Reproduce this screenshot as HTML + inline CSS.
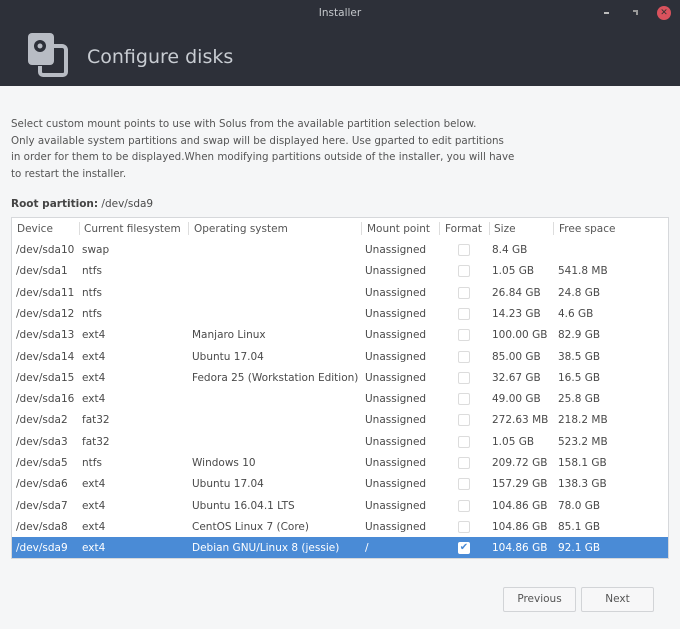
<!DOCTYPE html><html><head><style>
*{margin:0;padding:0;box-sizing:border-box}
body{width:680px;height:629px;background:#f5f6f7;font-family:"DejaVu Sans","Liberation Sans",sans-serif;font-size:10.5px;color:#4a4a4a;position:relative;overflow:hidden}
.hdr{position:absolute;left:0;top:0;width:680px;height:86px;background:#2d3039}
.t{position:absolute;top:7px;width:680px;text-align:center;color:#c5c8cc;font-size:10.5px}
.h1{position:absolute;left:87px;top:46px;color:#c8ccd2;font-size:19px}
p.d{position:absolute;left:11px;top:116px;line-height:16.5px;color:#555;font-size:10.3px}
.rp{position:absolute;left:11px;top:198px}
.tb{position:absolute;left:11px;top:217px;width:658px;height:342px;background:#fff;border:1px solid #d6d8db}
.r{position:absolute;left:0;width:656px;height:21.3px;line-height:22px}
.r span{position:absolute}
.hd{color:#555}
.sep{position:absolute;top:4px;width:1px;height:13px;background:#ddd}
.cb{position:absolute;left:446px;top:5px;width:12px;height:12px;border:1px solid #dcdcdc;border-radius:2px;background:#fff}
.sel{background:#4a8bd6;color:#fff}
.btn{position:absolute;top:587px;height:25px;border:1px solid #d2d4d7;border-radius:2px;background:#f7f7f8;text-align:center;line-height:23px;color:#555}
</style></head><body>
<div class="hdr">
<div class="t">Installer</div>
<div style="position:absolute;left:604px;top:12px;width:5px;height:2px;background:#bbb"></div>
<div style="position:absolute;left:633px;top:10px;width:5px;height:5px;border-top:2px solid #999;border-right:2px solid #999"></div>
<div style="position:absolute;left:657px;top:6px;width:14px;height:14px;border-radius:7px;background:#d9525d;color:#333;font-size:9px;line-height:14px;text-align:center">✕</div>
<svg style="position:absolute;left:28px;top:32px" width="42" height="46" viewBox="0 0 42 46"><path d="M10 14h24a4 4 0 0 1 4 4v22a3 3 0 0 1-3 3H15a3 3 0 0 1-3-3v-6" fill="none" stroke="#b8bcc4" stroke-width="4"/><rect x="0" y="1" width="26" height="32" rx="4" fill="#b8bcc4"/><circle cx="12" cy="14" r="6" fill="#2d3039"/><circle cx="12" cy="14" r="2.5" fill="#b8bcc4"/></svg>
<div class="h1">Configure disks</div>
</div>
<p class="d">Select custom mount points to use with Solus from the available partition selection below.<br>Only available system partitions and swap will be displayed here. Use gparted to edit partitions<br>in order for them to be displayed.When modifying partitions outside of the installer, you will have<br>to restart the installer.</p>
<div class="rp"><b style="color:#444">Root partition:</b> /dev/sda9</div>
<div class="tb">
<div class="r hd" style="top:0"><span style="left:5px">Device</span><i class="sep" style="left:67px"></i><span style="left:72px">Current filesystem</span><i class="sep" style="left:176px"></i><span style="left:182px">Operating system</span><i class="sep" style="left:349px"></i><span style="left:355px">Mount point</span><i class="sep" style="left:427px"></i><span style="left:433px">Format</span><i class="sep" style="left:477px"></i><span style="left:482px">Size</span><i class="sep" style="left:541px"></i><span style="left:547px">Free space</span></div>
<div id="rows"></div>
</div>
<div class="btn" style="left:503px;width:73px">Previous</div>
<div class="btn" style="left:581px;width:73px">Next</div>
<script>
var d=[["sda10","swap","","8.4 GB",""],["sda1","ntfs","","1.05 GB","541.8 MB"],["sda11","ntfs","","26.84 GB","24.8 GB"],["sda12","ntfs","","14.23 GB","4.6 GB"],["sda13","ext4","Manjaro Linux","100.00 GB","82.9 GB"],["sda14","ext4","Ubuntu 17.04","85.00 GB","38.5 GB"],["sda15","ext4","Fedora 25 (Workstation Edition)","32.67 GB","16.5 GB"],["sda16","ext4","","49.00 GB","25.8 GB"],["sda2","fat32","","272.63 MB","218.2 MB"],["sda3","fat32","","1.05 GB","523.2 MB"],["sda5","ntfs","Windows 10","209.72 GB","158.1 GB"],["sda6","ext4","Ubuntu 17.04","157.29 GB","138.3 GB"],["sda7","ext4","Ubuntu 16.04.1 LTS","104.86 GB","78.0 GB"],["sda8","ext4","CentOS Linux 7 (Core)","104.86 GB","85.1 GB"],["sda9","ext4","Debian GNU/Linux 8 (jessie)","104.86 GB","92.1 GB"]];
var h="";d.forEach(function(r,i){var s=i==14;h+='<div class="r'+(s?' sel':'')+'" style="top:'+(21+i*21.3)+'px"><span style="left:4px">/dev/'+r[0]+'</span><span style="left:70px">'+r[1]+'</span><span style="left:180px">'+r[2]+'</span><span style="left:353px">'+(s?'/':'Unassigned')+'</span>'+(s?'<i class="cb" style="border-color:#fff;color:#4a8bd6;font-size:10px;line-height:10px;text-align:center;font-style:normal">✔</i>':'<i class="cb"></i>')+'<span style="left:480px">'+r[3]+'</span><span style="left:546px">'+r[4]+'</span></div>'});
document.getElementById("rows").innerHTML=h;
</script>
</body></html>
